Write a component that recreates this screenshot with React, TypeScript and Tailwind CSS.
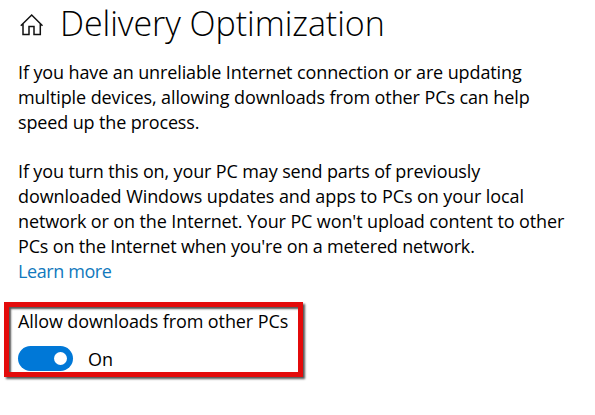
const intro = [
  { text: "If you have an unreliable Internet connection or are updating", spacing: "tracking-[-0.115px]" },
  { text: "multiple devices, allowing downloads from other PCs can help", spacing: "tracking-[-0.1px]" },
  { text: "speed up the process.", spacing: "tracking-[-0.14px]" },
];

const details = [
  { text: "If you turn this on, your PC may send parts of previously", spacing: "tracking-[-0.13px]" },
  { text: "downloaded Windows updates and apps to PCs on your local", spacing: "tracking-[-0.08px]" },
  { text: "network or on the Internet. Your PC won't upload content to other", spacing: "tracking-[-0.12px]" },
  { text: "PCs on the Internet when you're on a metered network.", spacing: "tracking-[-0.17px]" },
];

function Paragraph({ lines }: { lines: { text: string; spacing: string }[] }) {
  return (
    <p>
      {lines.map((line) => (
        <span key={line.text} className={`block w-fit whitespace-nowrap ${line.spacing}`}>
          {line.text}
        </span>
      ))}
    </p>
  );
}

function HomeIcon() {
  return (
    <svg className="mt-[13px] h-[24px] w-[24px] shrink-0" viewBox="0 0 24 24" fill="none" stroke="#111" strokeWidth="1.5">
      <path d="M.8 12.7 11.7 2 22.5 12.7M3 10.8V21.5H9V13.5H14V21.5H20.3V10.8" />
    </svg>
  );
}

export default function App() {
  return (
    <main className="h-[415px] w-[595px] overflow-hidden bg-white pl-[18px] font-['Open_Sans','Noto_Sans',sans-serif] text-[18px] leading-[25px] text-black">
      <header className="flex h-[60px] gap-[16px] pl-[2px]">
        <HomeIcon />
        <h1 className="whitespace-nowrap text-[34px] font-[340] leading-[46px] tracking-[-0.05px]">Delivery Optimization</h1>
      </header>
      <Paragraph lines={intro} />
      <div className="mt-[24px]">
        <Paragraph lines={details} />
        <a className="block w-fit tracking-[-0.4px] text-[#1179bd]">Learn more</a>
      </div>
      <section className="-ml-[14px] mt-[18px] h-[75px] w-[299px] border-[5px] border-[#e30b0b] pl-[9px] pt-[2px] shadow-[2px_2px_2px_#555,inset_2px_2px_2px_#555]">
        <div className="w-fit whitespace-nowrap tracking-[-0.1px]">Allow downloads from other PCs</div>
        <div className="mt-[12px] flex items-center gap-[15px]">
          <span className="flex h-[25px] w-[55px] items-center justify-end rounded-full bg-[#0078d7] pr-[6px]">
            <span className="size-[13px] rounded-full bg-white" />
          </span>
          <span className="-mb-[2px]">On</span>
        </div>
      </section>
    </main>
  );
}
